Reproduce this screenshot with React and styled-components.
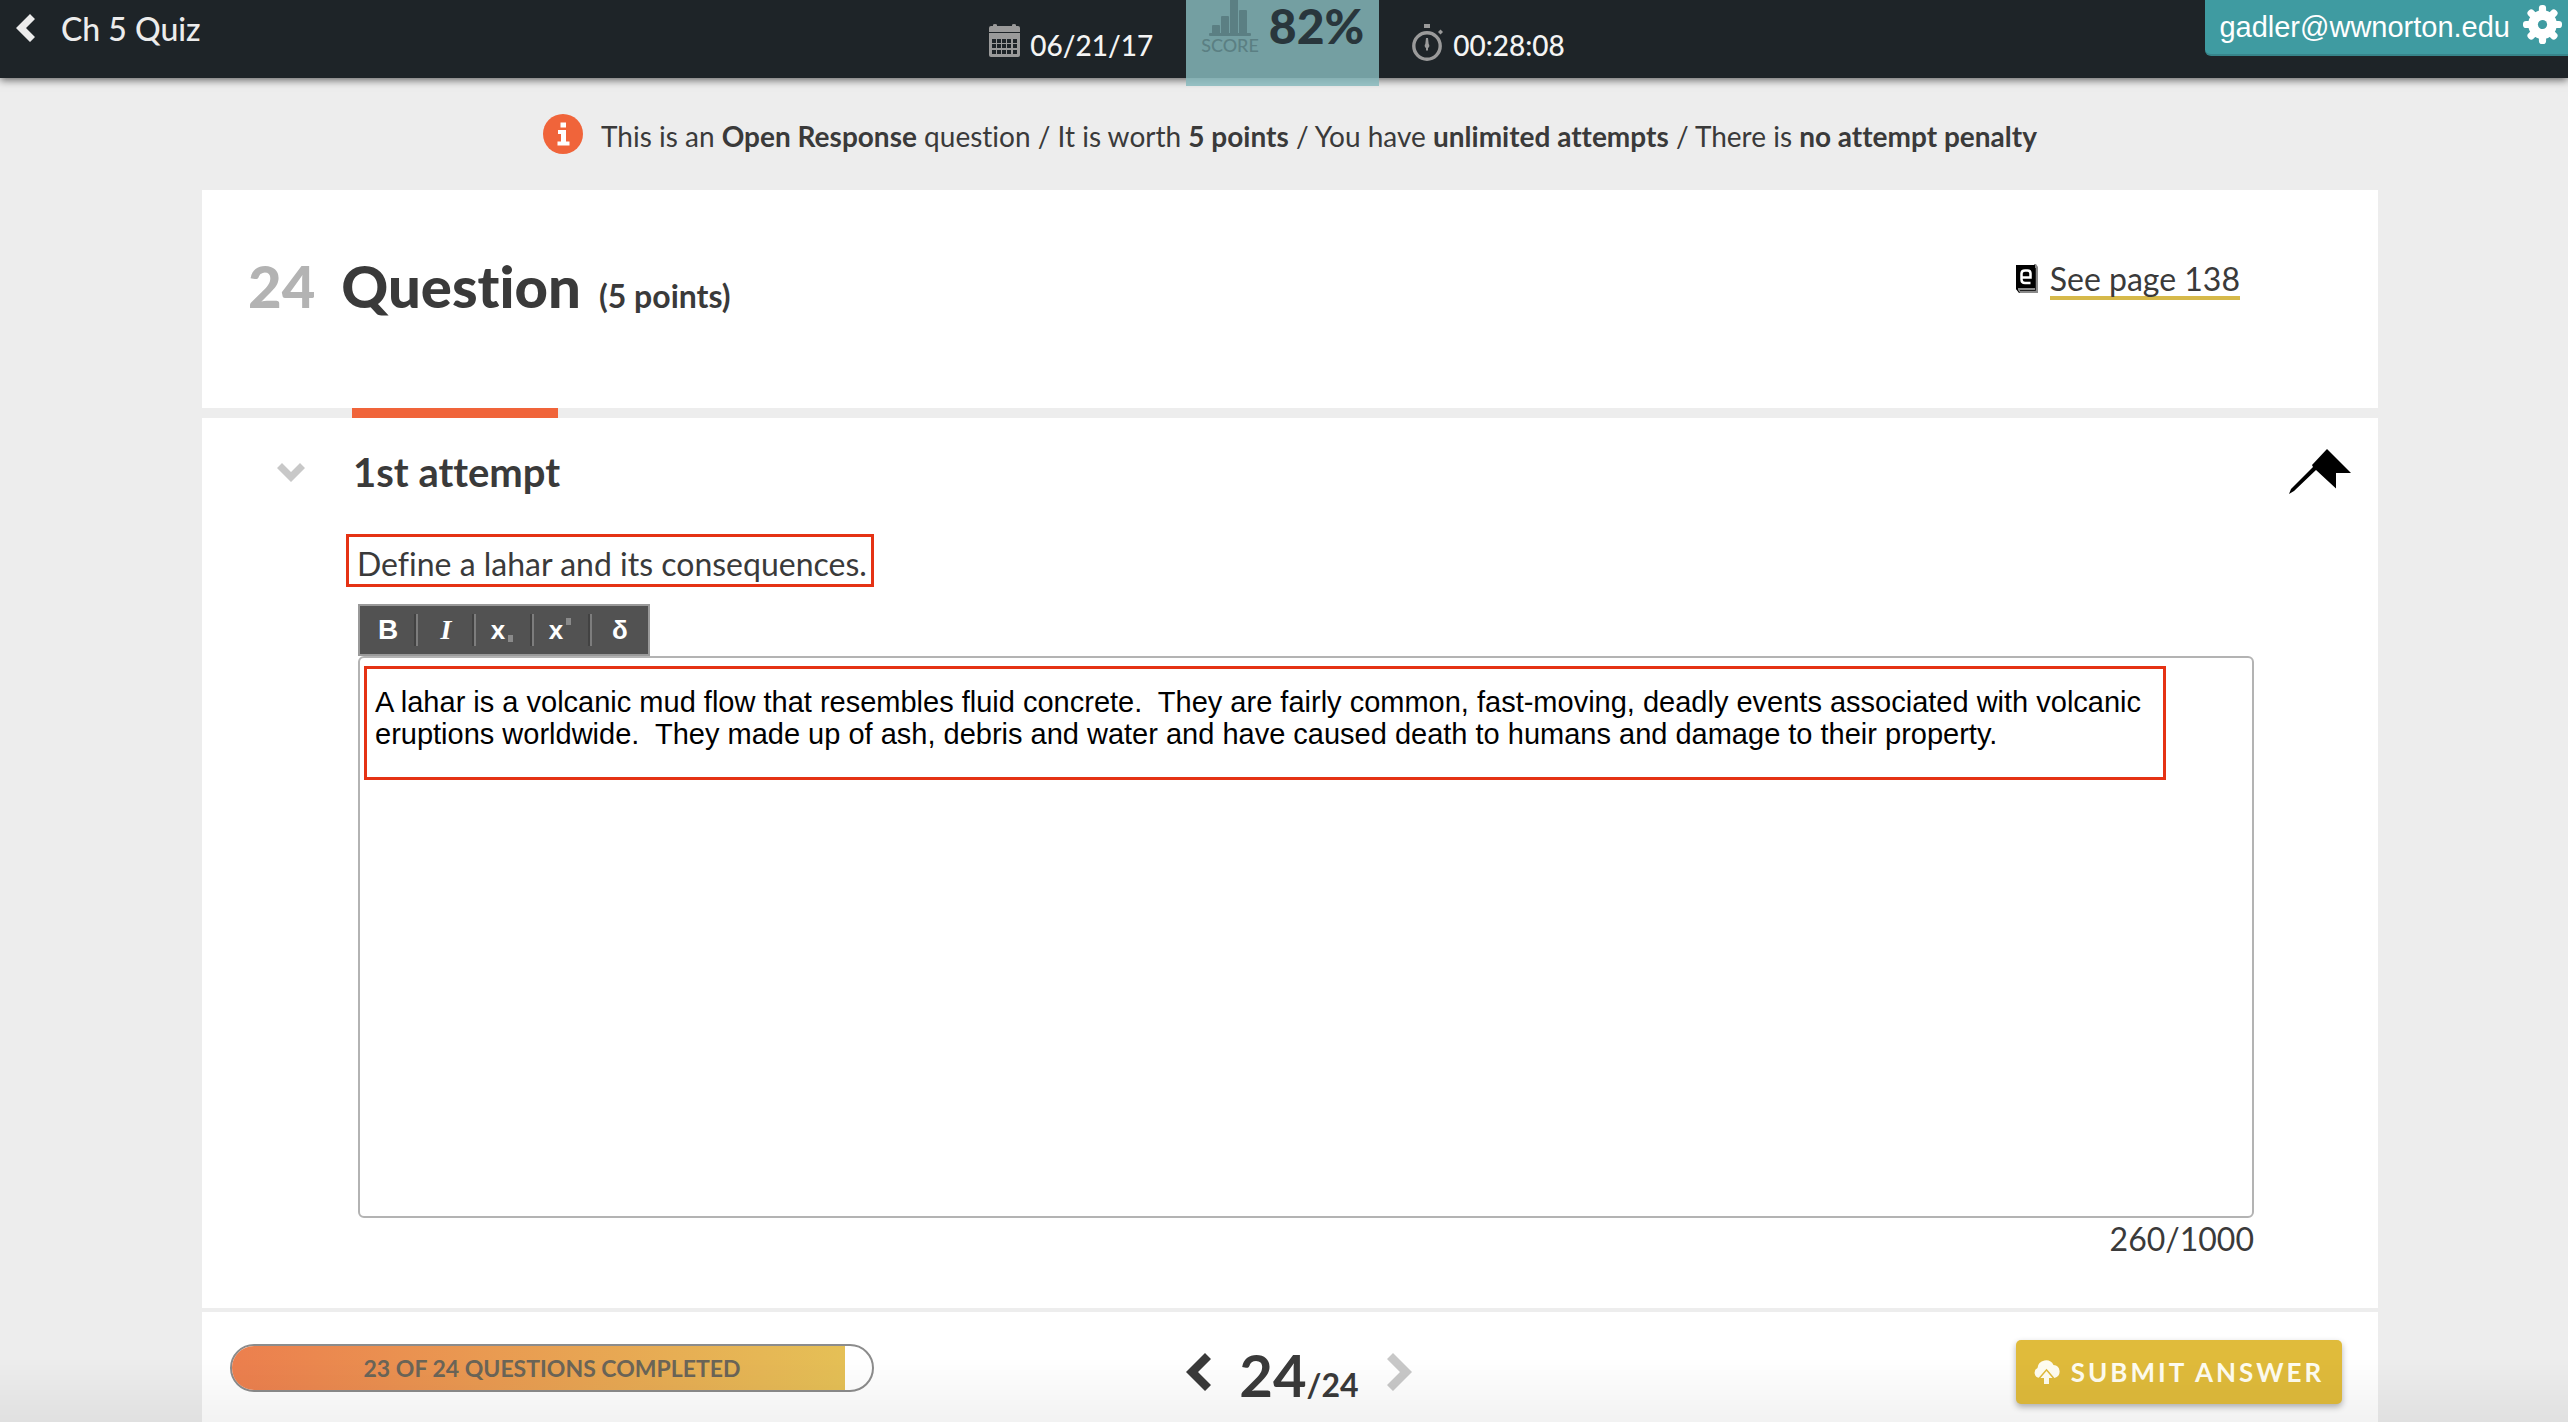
import React, { useState } from "react";
import styled, { createGlobalStyle } from "styled-components";

const GlobalStyle = createGlobalStyle`
  * {
    box-sizing: border-box;
  }

  body {
    margin: 0;
    background-color: #ededed;
    color: #3a3a3a;
    font-family: Lato, "Open Sans", sans-serif;
    font-variant-ligatures: no-common-ligatures;
  }

  button {
    padding: 0;
    border: 0;
    background: none;
    color: inherit;
    font-family: inherit;
    cursor: pointer;
  }

  svg {
    display: block;
    flex: none;
  }
`;

const Page = styled.div`
  position: relative;
  min-height: 100vh;
`;

const BottomFade = styled.div`
  position: fixed;
  right: 0;
  bottom: 0;
  left: 0;
  height: 64px;
  background: linear-gradient(rgba(0, 0, 0, 0), rgba(0, 0, 0, 0.05));
  pointer-events: none;
`;

const Header = styled.header`
  position: relative;
  display: grid;
  grid-template-columns: 1fr auto 1fr;
  align-items: start;
  height: 78px;
  background-color: #1e2428;
  box-shadow: 0 2px 8px rgba(0, 0, 0, 0.6);
`;

const BackLink = styled.a`
  display: flex;
  align-items: center;
  justify-self: start;
  gap: 25px;
  height: 56px;
  padding-left: 16px;
  color: #ececec;
  font-size: 32px;
  font-weight: 500;
  text-decoration: none;
`;

const Stats = styled.div`
  display: flex;
  gap: 33px;
  margin-right: 14px;
`;

const Stat = styled.div`
  display: flex;
  align-items: flex-start;
  gap: 10px;
  padding-top: 24px;
  color: #f4f4f4;
  font-size: 28px;
  font-weight: 500;
  line-height: 42px;
`;

const Score = styled.div`
  display: flex;
  gap: 10px;
  height: 86px;
  padding: 0 15px;
  background-color: rgba(134, 184, 188, 0.83);
  color: #29363c;
  font-size: 48px;
  font-weight: 900;
  line-height: 52px;
`;

const ScoreLabel = styled.div`
  display: flex;
  flex-direction: column;
  align-items: center;
  color: #5b7f83;
  font-size: 18px;
  font-weight: 500;
  line-height: 18px;
`;

const Account = styled.button`
  display: flex;
  align-items: center;
  justify-self: end;
  gap: 13px;
  height: 56px;
  padding: 0 6px 0 14px;
  border-bottom: 2px solid #37858b;
  border-bottom-left-radius: 6px;
  background-color: #3f9ba1;
  color: #fff;
  font-family: "Liberation Sans", Arial, sans-serif;
  font-size: 29px;

  svg {
    align-self: flex-start;
    margin-top: 5px;
  }
`;

const Content = styled.main`
  padding: 0 190px 0 202px;
`;

const Notice = styled.div`
  display: flex;
  align-items: center;
  justify-content: center;
  gap: 18px;
  height: 112px;
  font-size: 28px;
  line-height: 32px;

  span {
    padding-top: 4px;
  }
`;

const QuestionHeader = styled.section`
  display: flex;
  justify-content: space-between;
  align-items: flex-start;
  height: 218px;
  padding: 60px 138px 0 46px;
  background-color: #fff;
`;

const QuestionTitle = styled.h1`
  display: flex;
  align-items: baseline;
  margin: 0;
  font-size: 58px;
  font-weight: 900;
  line-height: 72px;
`;

const QuestionNumber = styled.span`
  margin-right: 26px;
  color: #b3b3b3;
`;

const QuestionPoints = styled.small`
  margin-left: 18px;
  font-size: 32px;
  font-weight: 700;
`;

const Reference = styled.div`
  display: flex;
  align-items: flex-start;
  gap: 12px;
  padding-top: 12px;

  svg {
    margin-top: 2px;
  }
`;

const PageLink = styled.a`
  border-bottom: 4px solid #d6b94a;
  color: inherit;
  font-size: 32px;
  line-height: 34px;
  text-decoration: none;
`;

const TabStrip = styled.div`
  height: 10px;
  padding-left: 150px;
`;

const ActiveTab = styled.div`
  width: 206px;
  height: 100%;
  background-color: #f0643a;
`;

const Attempt = styled.section`
  padding-bottom: 48px;
  background-color: #fff;
`;

const AttemptHeader = styled.div`
  display: flex;
  align-items: center;
  gap: 48px;
  padding: 30px 27px 0 75px;
`;

const AttemptTitle = styled.h2`
  flex: 1;
  margin: 0;
  font-size: 40px;
  font-weight: 700;
  line-height: 48px;
`;

const Response = styled.div`
  margin: 38px 124px 0 156px;
`;

const Prompt = styled.label`
  display: block;
  width: fit-content;
  margin-left: -12px;
  padding: 7px 4px 0 8px;
  border: 3px solid #e53214;
  font-size: 32px;
  line-height: 40px;
`;

const Toolbar = styled.div`
  display: flex;
  align-items: center;
  width: 292px;
  height: 52px;
  margin-top: 17px;
  border: 2px solid #9a9a9a;
  background-color: #525252;
`;

const ToolButton = styled.button`
  display: flex;
  flex: 1 1 0;
  align-items: center;
  justify-content: center;
  height: 32px;
  color: #fff;
  font-family: ${(p) => (p.$serif ? '"Liberation Serif", serif' : '"Liberation Sans", sans-serif')};
  font-size: ${(p) => p.$size || 28}px;
  font-style: ${(p) => (p.$serif ? "italic" : "normal")};
  font-weight: 700;

  & + & {
    border-left: 2px solid #7d7d7d;
    box-shadow: -2px 0 0 #424242;
  }
`;

const ScriptMark = styled.span`
  align-self: ${(p) => (p.$up ? "flex-start" : "flex-end")};
  width: 5px;
  height: 7px;
  margin: 4px 4px 4px 3px;
  background-color: #8a8a8a;
`;

const Editor = styled.div`
  position: relative;
`;

const AnswerBox = styled.textarea`
  display: block;
  width: 100%;
  height: 562px;
  padding: 28px 88px 0 15px;
  border: 2px solid #b3b3b3;
  border-radius: 6px;
  outline: 0;
  background-color: #fff;
  color: #000;
  font-family: "Liberation Sans", Arial, sans-serif;
  font-size: 29px;
  line-height: 32px;
  resize: none;
`;

const AnswerHighlight = styled.div`
  position: absolute;
  top: 10px;
  right: 88px;
  left: 6px;
  height: 114px;
  border: 3px solid #e53214;
  pointer-events: none;
`;

const Counter = styled.div`
  font-size: 32px;
  line-height: 42px;
  text-align: right;
`;

const Footer = styled.footer`
  display: grid;
  grid-template-columns: 1fr auto 1fr;
  align-items: start;
  height: 110px;
  margin-top: 4px;
  padding: 28px 36px 0 28px;
  background-color: #fff;
`;

const Progress = styled.div`
  position: relative;
  width: 644px;
  height: 48px;
  margin-top: 4px;
  border: 2px solid #8c8c8c;
  border-radius: 24px;
  background-color: #fff;
  overflow: hidden;
`;

const ProgressFill = styled.div`
  height: 100%;
  background: linear-gradient(to right, #ec7f4e, #e5c056);
`;

const ProgressText = styled.span`
  position: absolute;
  inset: 0;
  color: #6b6558;
  font-size: 23px;
  font-weight: 700;
  line-height: 44px;
  text-align: center;
`;

const Pager = styled.nav`
  display: flex;
  align-items: center;
  gap: 28px;
  height: 64px;
  padding-left: 26px;
`;

const PageCount = styled.div`
  padding-top: 4px;
  font-size: 58px;
  font-weight: 700;

  small {
    font-size: 32px;
  }
`;

const SubmitButton = styled.button`
  display: flex;
  align-items: center;
  justify-content: center;
  justify-self: end;
  gap: 11px;
  width: 326px;
  height: 64px;
  border-radius: 5px;
  background-color: #e0bb3b;
  box-shadow: 0 3px 6px rgba(0, 0, 0, 0.3);
  color: #fffdf0;
  font-size: 26px;
  font-weight: 700;
  letter-spacing: 3px;
`;

const Chevron = ({ points, width, height, color }) => (
  <svg width={width} height={height} viewBox={`0 0 ${width} ${height}`} aria-hidden="true">
    <polygon points={points} fill={color} />
  </svg>
);

const CalendarIcon = () => (
  <svg width="31" height="33" viewBox="0 0 31 33" aria-hidden="true">
    <path fill="#9a9a9a" d="M0 4q0-2 2-2h2V1q0-1 2-1t2 1v1h15V1q0-1 2-1t2 1v1h2q2 0 2 2v4H0z" />
    <path fill="#9a9a9a" d="M0 9h31v22q0 2-2 2H2q-2 0-2-2z" />
    {[15, 20, 26].map((y) =>
      [3, 8, 13, 18, 24].map((x) => (
        <rect key={`${x}-${y}`} x={x} y={y} width="4" height="4" fill="#1e2428" />
      ))
    )}
  </svg>
);

const ChartIcon = () => (
  <svg width="42" height="36" viewBox="0 0 42 36" fill="#5b7f83" aria-hidden="true">
    <rect x="3" y="25" width="8" height="9" rx="1" />
    <rect x="12" y="16" width="8" height="18" rx="1" />
    <rect x="21" y="-4" width="8" height="38" />
    <rect x="30" y="10" width="8" height="24" rx="1" />
    <rect x="0" y="33" width="42" height="3" rx="1" />
  </svg>
);

const StopwatchIcon = () => (
  <svg width="31" height="37" viewBox="0 0 31 37" aria-hidden="true">
    <circle cx="15" cy="22" r="13.2" fill="none" stroke="#9a9a9a" strokeWidth="3.4" />
    <rect x="12" y="0" width="6" height="4" fill="#9a9a9a" />
    <path fill="#9a9a9a" d="M28.500 5.500l2.500 2.500-2.500 2.500L26 8z" />
    <path fill="#9a9a9a" d="M14 14h2l.7 6a2.600 2.600 0 0 1-.7 4v2.500h-2V24a2.600 2.600 0 0 1-.7-4z" />
  </svg>
);

const GearIcon = () => (
  <svg width="39" height="39" viewBox="0 0 38 38" aria-hidden="true">
    <g fill="#fff">
      {[0, 45, 90, 135].map((angle) => (
        <rect
          key={angle}
          x="15.500"
          y="0"
          width="7"
          height="38"
          rx="3"
          transform={`rotate(${angle} 19 19)`}
        />
      ))}
      <circle cx="19" cy="19" r="14" />
    </g>
    <circle cx="19" cy="19" r="4.500" fill="#3f9ba1" />
  </svg>
);

const InfoIcon = () => (
  <svg width="40" height="40" viewBox="0 0 40 40" aria-hidden="true">
    <circle cx="20" cy="20" r="20" fill="#f0643a" />
    <path fill="#fff" d="M17.500 8.500h5.500v5h-5.500zM15 16h8v11.500h3.500v4h-12v-4H18V20h-3z" />
  </svg>
);

const EbookIcon = () => (
  <svg width="22" height="30" viewBox="0 0 22 30" aria-hidden="true">
    <path fill="#8a8a8a" d="M18 0h2l2 3v26H4l-4-4v-2h18z" />
    <path d="M0 1h19v23H2v2l2 3H3l-3-4z" />
    <path d="M4 26.500h15.500V4" fill="none" stroke="#222" strokeWidth="1" />
    <path
      d="M5.500 13.500h9V9.500q0-3-3-3H9q-3.500 0-3.500 3v6q0 3.500 3.500 3.500h5.500"
      fill="none"
      stroke="#fff"
      strokeWidth="2.500"
    />
  </svg>
);

const PinIcon = () => (
  <svg width="62" height="46" viewBox="0 0 62 46" aria-hidden="true">
    <path d="M38 0L62 24H47v15.500L27 21 5 42l-5 3 2-5 22-22-1-2z" />
  </svg>
);

const CloudUploadIcon = () => (
  <svg width="26" height="24" viewBox="0 0 26 24" aria-hidden="true">
    <path
      fill="#fffdf0"
      d="M5.500 18A5.300 5.300 0 0 1 3.500 8 8.500 8.500 0 0 1 19.500 5a6.600 6.600 0 0 1 1 13z"
    />
    <path
      fill="#fffdf0"
      stroke="#e0bb3b"
      strokeWidth="3"
      paintOrder="stroke"
      d="M12.500 11l6 7H15v6h-5v-6H6.500z"
    />
  </svg>
);

const LEFT = "0,14 14,0 19,5 10,14 19,23 14,28";
const DOWN = "0,5 5,0 14,9 23,0 28,5 14,19";
const PREV = "0,19 19,0 25,6 12,19 25,32 19,38";
const NEXT = "25,19 6,0 0,6 13,19 0,32 6,38";

const LIMIT = 1000;
const COMPLETED = 23;
const TOTAL = 24;

const App = () => {
  const [answer, setAnswer] = useState(
    "A lahar is a volcanic mud flow that resembles fluid concrete.  They are fairly common, fast-moving, deadly events associated with volcanic eruptions worldwide.  They made up of ash, debris and water and have caused death to humans and damage to their property."
  );

  return (
    <Page>
      <GlobalStyle />
      <Header>
        <BackLink href="#quiz">
          <Chevron points={LEFT} width={20} height={28} color="#ececec" />
          Ch 5 Quiz
        </BackLink>
        <Stats>
          <Stat>
            <CalendarIcon />
            06/21/17
          </Stat>
          <Score>
            <ScoreLabel>
              <ChartIcon />
              SCORE
            </ScoreLabel>
            82%
          </Score>
          <Stat>
            <StopwatchIcon />
            00:28:08
          </Stat>
        </Stats>
        <Account type="button">
          gadler@wwnorton.edu
          <GearIcon />
        </Account>
      </Header>
      <Content>
        <Notice>
          <InfoIcon />
          <span>
            This is an <b>Open Response</b> question / It is worth <b>5 points</b> / You have{" "}
            <b>unlimited attempts</b> / There is <b>no attempt penalty</b>
          </span>
        </Notice>
        <QuestionHeader>
          <QuestionTitle>
            <QuestionNumber>24</QuestionNumber>
            Question
            <QuestionPoints>(5 points)</QuestionPoints>
          </QuestionTitle>
          <Reference>
            <EbookIcon />
            <PageLink href="#page-138">See page 138</PageLink>
          </Reference>
        </QuestionHeader>
        <TabStrip>
          <ActiveTab />
        </TabStrip>
        <Attempt>
          <AttemptHeader>
            <button type="button" aria-label="Collapse attempt">
              <Chevron points={DOWN} width={28} height={19} color="#c8c8c8" />
            </button>
            <AttemptTitle>1st attempt</AttemptTitle>
            <button type="button" aria-label="Pin question">
              <PinIcon />
            </button>
          </AttemptHeader>
          <Response>
            <Prompt htmlFor="answer">Define a lahar and its consequences.</Prompt>
            <Toolbar role="toolbar" aria-label="Formatting">
              <ToolButton type="button" aria-label="Bold">
                B
              </ToolButton>
              <ToolButton type="button" aria-label="Italic" $serif>
                I
              </ToolButton>
              <ToolButton type="button" aria-label="Subscript" $size={26}>
                x<ScriptMark />
              </ToolButton>
              <ToolButton type="button" aria-label="Superscript" $size={26}>
                x<ScriptMark $up />
              </ToolButton>
              <ToolButton type="button" aria-label="Special characters" $size={26}>
                δ
              </ToolButton>
            </Toolbar>
            <Editor>
              <AnswerBox
                id="answer"
                maxLength={LIMIT}
                spellCheck={false}
                value={answer}
                onChange={(e) => setAnswer(e.target.value)}
              />
              <AnswerHighlight />
            </Editor>
            <Counter>
              {answer.length}/{LIMIT}
            </Counter>
          </Response>
        </Attempt>
        <Footer>
          <Progress
            role="progressbar"
            aria-label="Questions completed"
            aria-valuenow={COMPLETED}
            aria-valuemax={TOTAL}
          >
            <ProgressFill style={{ width: `${(COMPLETED / TOTAL) * 100}%` }} />
            <ProgressText>
              {COMPLETED} OF {TOTAL} QUESTIONS COMPLETED
            </ProgressText>
          </Progress>
          <Pager aria-label="Questions">
            <button type="button" aria-label="Previous question">
              <Chevron points={PREV} width={25} height={38} color="#3a3a3a" />
            </button>
            <PageCount>
              24<small>/{TOTAL}</small>
            </PageCount>
            <button type="button" aria-label="Next question" disabled>
              <Chevron points={NEXT} width={25} height={38} color="#c8c8c8" />
            </button>
          </Pager>
          <SubmitButton type="button">
            <CloudUploadIcon />
            SUBMIT ANSWER
          </SubmitButton>
        </Footer>
      </Content>
      <BottomFade />
    </Page>
  );
};

export default App;
